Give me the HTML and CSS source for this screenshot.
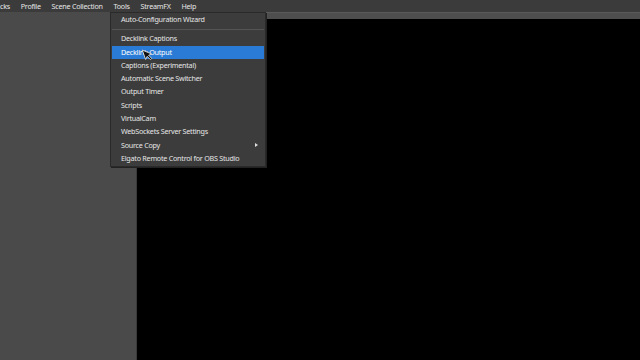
FILE: index.html
```html
<!DOCTYPE html>
<html lang="en">
<head>
  <meta charset="UTF-8">
  <title>OBS Studio</title>
  <link rel="stylesheet" href="styles.css">
</head>
<body>
  <!-- Main menu bar -->
  <div class="menubar">
    <span class="menu-item cut">cks</span>
    <span class="menu-item">Profile</span>
    <span class="menu-item">Scene Collection</span>
    <span class="menu-item open">Tools</span>
    <span class="menu-item">StreamFX</span>
    <span class="menu-item">Help</span>
  </div>

  <div class="workspace">
    <div class="side-panel"></div>
    <div class="preview-area">
      <div class="preview-top"></div>
      <div class="preview"></div>
    </div>
  </div>

  <!-- Tools dropdown -->
  <div class="dropdown">
    <div class="entry">Auto-Configuration Wizard</div>
    <div class="separator"></div>
    <div class="entry">Decklink Captions</div>
    <div class="entry active">Decklink Output</div>
    <div class="entry">Captions (Experimental)</div>
    <div class="entry">Automatic Scene Switcher</div>
    <div class="entry">Output Timer</div>
    <div class="entry">Scripts</div>
    <div class="entry">VirtualCam</div>
    <div class="entry">WebSockets Server Settings</div>
    <div class="entry submenu">Source Copy <span class="arrow"></span></div>
    <div class="entry">Elgato Remote Control for OBS Studio</div>
  </div>

  <!-- mouse pointer -->
  <svg class="cursor" width="12" height="14" viewBox="0 0 12 14">
    <path d="M1 1 L1 11 L3.5 8.6 L5.4 12.8 L7 12.1 L5.2 8 L8.6 8 Z" fill="#111" stroke="#ddd" stroke-width="0.8"/>
  </svg>
</body>
</html>
```

FILE: styles.css
```css
:root {
  --menubar-bg: #3b3b3b;
  --panel-bg: #4a4a4a;
  --menu-bg: #3c3c3c;
  --menu-border: #2a2a2a;
  --highlight: #2a7bd5;
  --text: #e6e6e6;
}

body {
  margin: 0;
  width: 640px;
  height: 360px;
  overflow: hidden;
  background: #000;
  font-family: "Noto Sans", sans-serif;
  font-size: 7.2px;
  letter-spacing: -0.25px;
  color: var(--text);
  position: relative;
}

/* Menu bar */
.menubar {
  height: 12px;
  background: var(--menubar-bg);
  display: flex;
  align-items: center;
}

.menu-item {
  padding: 0 5.4px;
  line-height: 12px;
}

.menu-item.cut {
  margin-left: -5.4px;
}

/* Layout below */
.workspace {
  display: flex;
  height: 348px;
}

.side-panel {
  width: 136px;
  background: var(--panel-bg);
  border-right: 1px solid #3a3a3a;
}

.preview-area {
  flex: 1;
  display: flex;
  flex-direction: column;
}

.preview-top {
  height: 6px;
  background: #4e4e4e;
  border-top: 1px solid #5a5a5a;
}

.preview {
  flex: 1;
  background: #000;
}

/* Dropdown */
.dropdown {
  position: absolute;
  left: 110px;
  top: 12px;
  width: 154px;
  padding: 0 0 1px;
  background: var(--menu-bg);
  border: 1px solid var(--menu-border);
  box-shadow: 1px 1px 0 #222;
}

.entry {
  height: 13.3px;
  line-height: 13.3px;
  padding-left: 9px;
  margin: 0 1px;
  position: relative;
}

.entry.active {
  background: var(--highlight);
  color: #fff;
}

.separator {
  height: 1px;
  margin: 3px 1px 2px;
  background: #555;
}

.arrow {
  position: absolute;
  right: 6px;
  top: 4px;
  width: 0;
  height: 0;
  border-left: 3px solid #ddd;
  border-top: 2.5px solid transparent;
  border-bottom: 2.5px solid transparent;
}

.cursor {
  position: absolute;
  left: 143px;
  top: 47px;
  transform: rotate(-20deg);
}
```
